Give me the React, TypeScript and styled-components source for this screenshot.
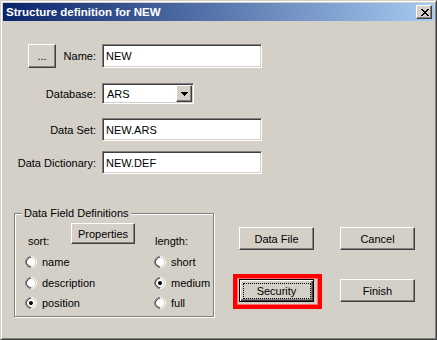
import React from 'react';
import styled, { createGlobalStyle, css } from 'styled-components';

const GlobalStyle = createGlobalStyle`
  html, body {
    margin: 0;
    padding: 0;
    background: #d4d0c8;
  }
  body {
    font-family: "Liberation Sans", Arial, sans-serif;
    font-size: 11px;
    color: #000;
  }
`;

const raised = css`
  background: #d4d0c8;
  border: 1px solid;
  border-color: #fff #404040 #404040 #fff;
  box-shadow: inset -1px -1px #808080, inset 1px 1px #d4d0c8;
`;

const sunken = css`
  background: #fff;
  border: 1px solid;
  border-color: #808080 #fff #fff #808080;
  box-shadow: inset 1px 1px #404040, inset -1px -1px #d4d0c8;
`;

const WindowSC = styled.div`
  width: 437px;
  height: 340px;
  box-sizing: border-box;
  background: #d4d0c8;
  border: 1px solid;
  border-color: #d4d0c8 #404040 #404040 #d4d0c8;
  box-shadow: inset 1px 1px #fff, inset -1px -1px #808080;
  padding: 2px;
  display: flex;
  flex-direction: column;
`;

const TitleBarSC = styled.div`
  height: 18px;
  flex: none;
  display: flex;
  align-items: center;
  justify-content: space-between;
  padding: 0 2px 0 3px;
  background: linear-gradient(to right, #0a246a, #a6caf0);
  color: #fff;
  font-weight: bold;
  font-size: 11.5px;
`;

const CloseButtonSC = styled.div`
  ${raised};
  width: 16px;
  height: 14px;
  box-sizing: border-box;
  display: flex;
  align-items: center;
  justify-content: center;
  padding-left: 1px;
`;

const BodySC = styled.div`
  padding: 23px 0 0 11px;
`;

const RowSC = styled.div<{ $mt?: number }>`
  display: grid;
  grid-template-columns: 82px 160px;
  column-gap: 6px;
  align-items: center;
  margin-top: ${(p) => p.$mt || 0}px;
`;

const LabelCellSC = styled.div<{ $withButton?: boolean }>`
  display: flex;
  align-items: center;
  justify-content: ${(p) => (p.$withButton ? 'space-between' : 'flex-end')};
  padding-left: ${(p) => (p.$withButton ? 14 : 0)}px;
  white-space: nowrap;
`;

const FieldSC = styled.input<{ $h?: number }>`
  ${sunken};
  width: 160px;
  height: ${(p) => p.$h || 23}px;
  box-sizing: border-box;
  padding: 0 3px;
  margin: 0;
  font-family: inherit;
  font-size: 11px;
  color: #000;
  outline: none;
`;

const ComboSC = styled.div`
  ${sunken};
  width: 92px;
  height: 21px;
  box-sizing: border-box;
  display: flex;
  align-items: center;
  justify-content: space-between;
  padding: 2px 2px 2px 4px;
`;

const ComboArrowSC = styled.div`
  ${raised};
  width: 16px;
  height: 17px;
  box-sizing: border-box;
  display: flex;
  align-items: center;
  justify-content: center;
  margin-right: -1px;
`;

const ButtonSC = styled.button<{ $w?: number; $h?: number }>`
  ${raised};
  width: ${(p) => p.$w || 75}px;
  height: ${(p) => p.$h || 23}px;
  box-sizing: border-box;
  padding: 0;
  margin: 0;
  font-family: inherit;
  font-size: 11px;
  color: #000;
  position: relative;
`;

const DefaultButtonSC = styled(ButtonSC)`
  border: 1px solid #000;
  box-shadow: inset 1px 1px #fff, inset -1px -1px #404040, inset -2px -2px #808080;

  &::after {
    content: '';
    position: absolute;
    top: 3px;
    left: 3px;
    right: 2px;
    bottom: 2px;
    border: 1px dotted #000;
  }
`;

const HighlightSC = styled.div`
  position: relative;

  &::before {
    content: '';
    position: absolute;
    left: -6px;
    top: -5px;
    width: 89px;
    height: 35px;
    box-sizing: border-box;
    border: 4px solid #ff0000;
    box-shadow: inset 1px 1px #ff6a6a, inset -1px -1px #ff6a6a;
  }
`;

const BottomSC = styled.div`
  display: flex;
  align-items: flex-start;
  margin-top: 39px;
`;

const GroupSC = styled.div`
  position: relative;
  width: 200px;
  height: 104px;
  box-sizing: border-box;
  border: 1px solid #808080;
  box-shadow: inset 1px 1px #fff, 1px 1px #fff;
  padding: 9px 0 0 10px;
`;

const LegendSC = styled.span`
  position: absolute;
  top: -7px;
  left: 7px;
  padding: 0 2px;
  background: #d4d0c8;
  line-height: 13px;
`;

const GroupHeaderSC = styled.div`
  display: grid;
  grid-template-columns: 46px 83px auto;
  align-items: start;
`;

const HeaderLabelSC = styled.span<{ $pl?: number }>`
  padding-top: 12px;
  padding-left: ${(p) => p.$pl || 0}px;
  line-height: 13px;
`;

const RadioGridSC = styled.div`
  display: grid;
  grid-template-columns: 129px auto;
  grid-auto-rows: 20.5px;
  margin-top: 4px;
`;

const RadioItemSC = styled.label`
  display: flex;
  align-items: center;
  gap: 5px;
  white-space: nowrap;
`;

const RadioCircleSC = styled.span`
  width: 12px;
  height: 12px;
  box-sizing: border-box;
  border-radius: 50%;
  border: 1px solid;
  border-color: #808080 #fff #fff #808080;
  transform: rotate(-45deg);
  display: flex;
`;

const RadioInnerSC = styled.span<{ $checked?: boolean }>`
  flex: 1;
  border-radius: 50%;
  border: 1px solid;
  border-color: #404040 #d4d0c8 #d4d0c8 #404040;
  background: #fff;
  display: flex;
  align-items: center;
  justify-content: center;

  &::after {
    content: '';
    width: 4px;
    height: 4px;
    border-radius: 50%;
    background: ${(p) => (p.$checked ? '#000' : 'transparent')};
  }
`;

const ButtonGridSC = styled.div`
  display: grid;
  grid-template-columns: 75px 75px;
  grid-auto-rows: 23px;
  column-gap: 26px;
  row-gap: 29px;
  margin: 14px 0 0 25px;
`;

const CloseGlyph = () => (
  <svg width="8" height="7" viewBox="0 0 8 7" shapeRendering="crispEdges">
    <path
      fill="#000"
      d="M0 0h2v1H0zM6 0h2v1H6zM1 1h2v1H1zM5 1h2v1H5zM2 2h4v1H2zM3 3h2v1H3zM2 4h4v1H2zM1 5h2v1H1zM5 5h2v1H5zM0 6h2v1H0zM6 6h2v1H6z"
    />
  </svg>
);

const DownArrow = () => (
  <svg width="7" height="4" viewBox="0 0 7 4" shapeRendering="crispEdges">
    <path fill="#000" d="M0 0h7v1H0zM1 1h5v1H1zM2 2h3v1H2zM3 3h1v1H3z" />
  </svg>
);

type RadioProps = { label: string; checked?: boolean };

const Radio = ({ label, checked }: RadioProps) => (
  <RadioItemSC>
    <RadioCircleSC>
      <RadioInnerSC $checked={checked} />
    </RadioCircleSC>
    {label}
  </RadioItemSC>
);

const App = () => (
  <>
    <GlobalStyle />
    <WindowSC>
      <TitleBarSC>
        <span>Structure definition for NEW</span>
        <CloseButtonSC>
          <CloseGlyph />
        </CloseButtonSC>
      </TitleBarSC>
      <BodySC>
        <RowSC>
          <LabelCellSC $withButton>
            <ButtonSC $w={28} $h={24}>...</ButtonSC>
            <span>Name:</span>
          </LabelCellSC>
          <FieldSC readOnly value="NEW" $h={24} />
        </RowSC>
        <RowSC $mt={15}>
          <LabelCellSC>Database:</LabelCellSC>
          <ComboSC>
            <span>ARS</span>
            <ComboArrowSC>
              <DownArrow />
            </ComboArrowSC>
          </ComboSC>
        </RowSC>
        <RowSC $mt={14}>
          <LabelCellSC>Data Set:</LabelCellSC>
          <FieldSC readOnly value="NEW.ARS" />
        </RowSC>
        <RowSC $mt={10}>
          <LabelCellSC>Data Dictionary:</LabelCellSC>
          <FieldSC readOnly value="NEW.DEF" />
        </RowSC>

        <BottomSC>
          <GroupSC>
            <LegendSC>Data Field Definitions</LegendSC>
            <GroupHeaderSC>
              <HeaderLabelSC $pl={3}>sort:</HeaderLabelSC>
              <ButtonSC $w={64} $h={21}>Properties</ButtonSC>
              <HeaderLabelSC $pl={1}>length:</HeaderLabelSC>
            </GroupHeaderSC>
            <RadioGridSC>
              <Radio label="name" />
              <Radio label="short" />
              <Radio label="description" />
              <Radio label="medium" checked />
              <Radio label="position" checked />
              <Radio label="full" />
            </RadioGridSC>
          </GroupSC>
          <ButtonGridSC>
            <ButtonSC>Data File</ButtonSC>
            <ButtonSC>Cancel</ButtonSC>
            <HighlightSC>
              <DefaultButtonSC>Security</DefaultButtonSC>
            </HighlightSC>
            <ButtonSC>Finish</ButtonSC>
          </ButtonGridSC>
        </BottomSC>
      </BodySC>
    </WindowSC>
  </>
);

export default App;
